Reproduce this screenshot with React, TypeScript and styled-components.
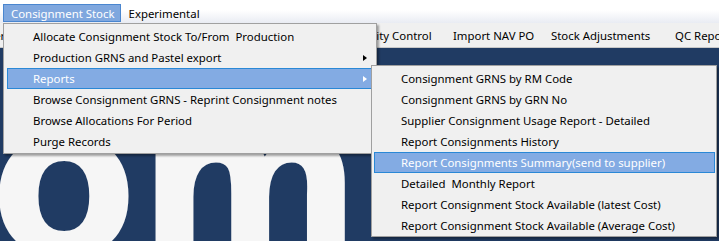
import React from "react";
import styled, { createGlobalStyle } from "styled-components";

const Global = createGlobalStyle`
  html, body { margin: 0; padding: 0; background: #203b63; }
  body { font-family: "Noto Sans", "Open Sans", sans-serif; font-size: 11.4px; }
`;

const Screen = styled.div`
  position: relative;
  width: 719px;
  height: 241px;
  overflow: hidden;
  display: flex;
  flex-direction: column;
  font-family: "Noto Sans", "Open Sans", sans-serif;
  font-size: 11.4px;
  color: #000;
`;

const MenuBar = styled.div`
  box-sizing: border-box;
  height: 23px;
  flex: none;
  padding: 4px 0 1px 3px;
  display: flex;
  background: linear-gradient(#ffffff 0%, #ffffff 45%, #e9ecf3 100%);
`;

const TopItem = styled.div<{ $active?: boolean }>`
  box-sizing: border-box;
  height: 18px;
  padding: 0 5px 0 7px;
  display: flex;
  align-items: center;
  white-space: nowrap;
  border: 1px solid ${(p) => (p.$active ? "#4a86cf" : "transparent")};
  background: ${(p) => (p.$active ? "#7fa7de" : "transparent")};
  color: ${(p) => (p.$active ? "#ffffff" : "#000000")};
`;

const ToolStrip = styled.div`
  box-sizing: border-box;
  height: 25px;
  flex: none;
  margin-left: -39px;
  display: flex;
  align-items: center;
  background: #f0f0f0;
  border-bottom: 1px solid #c8c8c8;
`;

const StripItem = styled.div<{ $w: number }>`
  flex: none;
  width: ${(p) => p.$w}px;
  white-space: nowrap;
  overflow: hidden;
`;

const Desktop = styled.div`
  flex: 1;
  background-color: #203b63;
  background-image: radial-gradient(rgba(255, 255, 255, 0.05) 0.6px, transparent 0.7px);
  background-size: 2px 2px;
  overflow: hidden;
`;

const Logo = styled.svg`
  display: block;
`;

const Menu = styled.div<{ $x: number; $y: number; $w: number; $pad: string }>`
  position: absolute;
  left: ${(p) => p.$x}px;
  top: ${(p) => p.$y}px;
  width: ${(p) => p.$w}px;
  box-sizing: border-box;
  padding: ${(p) => p.$pad};
  background: #f0f0f0;
  border: 1px solid #a0a0a0;
  box-shadow: 2px 2px 2px rgba(0, 0, 0, 0.35);
  display: flex;
  flex-direction: column;
`;

const Row = styled.div<{ $hl?: boolean; $indent: number }>`
  box-sizing: border-box;
  height: 21px;
  display: flex;
  align-items: center;
  padding: 0 5px 0 ${(p) => p.$indent}px;
  white-space: pre;
  border: 1px solid ${(p) => (p.$hl ? "#2a88d6" : "transparent")};
  background: ${(p) => (p.$hl ? "#83abe3" : "transparent")};
  color: ${(p) => (p.$hl ? "#ffffff" : "#000000")};
`;

const Arrow = styled.span<{ $light?: boolean }>`
  margin-left: auto;
  width: 0;
  height: 0;
  border-top: 3.5px solid transparent;
  border-bottom: 3.5px solid transparent;
  border-left: 4px solid ${(p) => (p.$light ? "#ffffff" : "#000000")};
`;

const stripItems = [
  { t: "Supplier", w: 62 },
  { t: "Goods Received", w: 130 },
  { t: "Stock Transfers", w: 100 },
  { t: "Production", w: 98 },
  { t: "Quality Control", w: 102 },
  { t: "Import NAV PO", w: 98 },
  { t: "Stock Adjustments", w: 124 },
  { t: "QC Reports", w: 90 },
];

const mainItems: { t: string; sub?: boolean; hl?: boolean }[] = [
  { t: "Allocate Consignment Stock To/From  Production" },
  { t: "Production GRNS and Pastel export", sub: true },
  { t: "Reports", sub: true, hl: true },
  { t: "Browse Consignment GRNS - Reprint Consignment notes" },
  { t: "Browse Allocations For Period" },
  { t: "Purge Records" },
];

const reportItems: { t: string; hl?: boolean }[] = [
  { t: "Consignment GRNS by RM Code" },
  { t: "Consignment GRNS by GRN No" },
  { t: "Supplier Consignment Usage Report - Detailed" },
  { t: "Report Consignments History" },
  { t: "Report Consignments Summary(send to supplier)", hl: true },
  { t: "Detailed  Monthly Report" },
  { t: "Report Consignment Stock Available (latest Cost)" },
  { t: "Report Consignment Stock Available (Average Cost)" },
];

export default function App() {
  return (
    <Screen>
      <Global />
      <MenuBar>
        <TopItem $active>Consignment Stock</TopItem>
        <TopItem>Experimental</TopItem>
      </MenuBar>
      <ToolStrip>
        {stripItems.map((s) => (
          <StripItem key={s.t} $w={s.w}>
            {s.t}
          </StripItem>
        ))}
      </ToolStrip>
      <Desktop>
        <Logo width="719" height="193" viewBox="0 0 719 193">
          <text
            x="-10"
            y="207"
            fill="#f6f6f6"
            fontFamily="DejaVu Sans"
            fontWeight="bold"
            fontSize="215"
          >
            om
          </text>
        </Logo>
      </Desktop>

      <Menu $x={3} $y={23} $w={374} $pad="2px 3px 1px 3px">
        {mainItems.map((m) => (
          <Row key={m.t} $hl={m.hl} $indent={25}>
            {m.t}
            {m.sub && <Arrow $light={m.hl} />}
          </Row>
        ))}
      </Menu>

      <Menu $x={371} $y={65} $w={346} $pad="2px 1px 0 2px">
        {reportItems.map((m) => (
          <Row key={m.t} $hl={m.hl} $indent={26}>
            {m.t}
          </Row>
        ))}
      </Menu>
    </Screen>
  );
}
